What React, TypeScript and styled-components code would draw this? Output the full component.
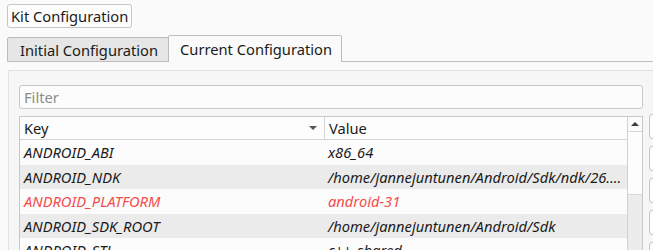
import React from "react";
import styled, { createGlobalStyle } from "styled-components";

const GlobalStyle = createGlobalStyle`
  body {
    margin: 0;
    background-color: #fafafa;
    font-family: "Noto Sans", "Open Sans", sans-serif;
    font-size: 14.7px;
    color: #1b1b1b;
  }
`;

const Page = styled.div`
  width: 653px;
  height: 250px;
  overflow: hidden;
  padding: 4px 0 0 7px;
  box-sizing: border-box;
`;

const KitButton = styled.button`
  height: 24px;
  padding: 0 3px;
  border: 1px solid #c6c6c6;
  border-radius: 3px;
  background-color: #fdfdfd;
  font: inherit;
  color: inherit;
`;

const TabBar = styled.div`
  display: flex;
  align-items: flex-end;
  margin-top: 7px;
  width: 646px;
`;

const Tab = styled.div<{ $active?: boolean }>`
  height: ${(p) => (p.$active ? "27px" : "25px")};
  padding: 0 ${(p) => (p.$active ? "9px" : "10px")} 0 ${(p) => (p.$active ? "11px" : "12px")};
  display: flex;
  align-items: center;
  box-sizing: border-box;
  border: 1px solid #bdbdbd;
  border-bottom: ${(p) => (p.$active ? "none" : "1px solid #bdbdbd")};
  border-radius: 2px 2px 0 0;
  background-color: ${(p) => (p.$active ? "#fafafa" : "#e6e6e6")};
  margin-left: ${(p) => (p.$active ? "-1px" : "0")};
  white-space: nowrap;
`;

const TabFiller = styled.div`
  flex: 1;
  border-bottom: 1px solid #bdbdbd;
`;

const Pane = styled.div`
  margin: 8px 0 0 1px;
  width: 760px;
  height: 200px;
  border-top: 1px solid #e2e2e2;
  border-left: 1px solid #e2e2e2;
  background-color: #f6f6f6;
  padding: 14px 0 0 10px;
  box-sizing: border-box;
`;

const FilterInput = styled.input`
  display: block;
  width: 624px;
  height: 24px;
  box-sizing: border-box;
  border: 1px solid #c8c8c8;
  border-radius: 3px;
  background-color: #fcfcfc;
  padding: 0 4px;
  font: inherit;
  color: inherit;
  outline: none;
  &::placeholder {
    color: #8b8b8b;
  }
`;

const Body = styled.div`
  display: flex;
  gap: 6px;
  margin-top: 7px;
`;

const TableFrame = styled.div`
  flex-shrink: 0;
  width: 624px;
  height: 140px;
  box-sizing: border-box;
  border: 1px solid #c8c8c8;
  border-bottom: none;
  display: flex;
  background-color: #fdfdfd;
`;

const TableMain = styled.div`
  flex: 1;
  min-width: 0;
`;

const HeaderRow = styled.div`
  display: grid;
  grid-template-columns: 305px 1fr;
  height: 22px;
  border-bottom: 1px solid #d4d4d4;
  background-color: #fdfdfd;
`;

const HeaderCell = styled.div<{ $divider?: boolean }>`
  position: relative;
  display: flex;
  align-items: center;
  padding-left: 4px;
  border-right: ${(p) => (p.$divider ? "1px solid #d4d4d4" : "none")};
`;

const SortArrow = styled.span`
  position: absolute;
  right: 7px;
  top: 9px;
  width: 0;
  height: 0;
  border-left: 4px solid transparent;
  border-right: 4px solid transparent;
  border-top: 4px solid #555;
`;

const Row = styled.div<{ $shade?: boolean; $changed?: boolean }>`
  display: grid;
  grid-template-columns: 305px 1fr;
  height: 24.5px;
  align-items: center;
  background-color: ${(p) => (p.$shade ? "#ebebeb" : "#fcfcfc")};
  color: ${(p) => (p.$changed ? "#f44c4c" : "#1b1b1b")};
  font-style: italic;
`;

const Cell = styled.div`
  padding-left: 4px;
  white-space: nowrap;
  overflow: hidden;
  text-overflow: ellipsis;
`;

const ValueCell = styled(Cell)`
  padding-left: 3px;
  padding-right: 2px;
`;

const ScrollBar = styled.div`
  flex-shrink: 0;
  width: 14px;
  border-left: 1px solid #d0d0d0;
  display: flex;
  flex-direction: column;
  background-color: #ececec;
`;

const ScrollUp = styled.div`
  height: 14px;
  background-color: #fbfbfb;
  display: flex;
  align-items: center;
  justify-content: center;
  &::before {
    content: "";
    border-left: 4px solid transparent;
    border-right: 4px solid transparent;
    border-bottom: 4px solid #3a3a3a;
  }
`;

const ScrollThumb = styled.div`
  height: 62px;
  background-color: #fdfdfd;
  border-top: 1px solid #d8d8d8;
  border-bottom: 1px solid #d8d8d8;
`;

const ButtonColumn = styled.div`
  display: flex;
  flex-direction: column;
  gap: 7px;
  margin-top: -2px;
`;

const SideButton = styled.button`
  width: 90px;
  height: 25px;
  border: 1px solid #c6c6c6;
  border-radius: 3px;
  background-color: #fdfdfd;
  font: inherit;
`;

const rows = [
  { key: "ANDROID_ABI", value: "x86_64" },
  { key: "ANDROID_NDK", value: "/home/jannejuntunen/Android/Sdk/ndk/26.1.10909125" },
  { key: "ANDROID_PLATFORM", value: "android-31", changed: true },
  { key: "ANDROID_SDK_ROOT", value: "/home/jannejuntunen/Android/Sdk" },
  { key: "ANDROID_STL", value: "c++_shared" },
];

function App() {
  return (
    <>
      <GlobalStyle />
      <Page>
        <KitButton>Kit Configuration</KitButton>
        <TabBar>
          <Tab>Initial Configuration</Tab>
          <Tab $active>Current Configuration</Tab>
          <TabFiller />
        </TabBar>
        <Pane>
          <FilterInput placeholder="Filter" />
          <Body>
            <TableFrame>
              <TableMain>
                <HeaderRow>
                  <HeaderCell $divider>
                    Key
                    <SortArrow />
                  </HeaderCell>
                  <HeaderCell>Value</HeaderCell>
                </HeaderRow>
                {rows.map((r, i) => (
                  <Row key={r.key} $shade={i % 2 === 1} $changed={r.changed}>
                    <Cell>{r.key}</Cell>
                    <ValueCell>{r.value}</ValueCell>
                  </Row>
                ))}
              </TableMain>
              <ScrollBar>
                <ScrollUp />
                <ScrollThumb />
              </ScrollBar>
            </TableFrame>
            <ButtonColumn>
              <SideButton>Add</SideButton>
              <SideButton>Edit</SideButton>
              <SideButton>Set</SideButton>
              <SideButton>Unset</SideButton>
              <SideButton>Reset</SideButton>
            </ButtonColumn>
          </Body>
        </Pane>
      </Page>
    </>
  );
}

export default App;
